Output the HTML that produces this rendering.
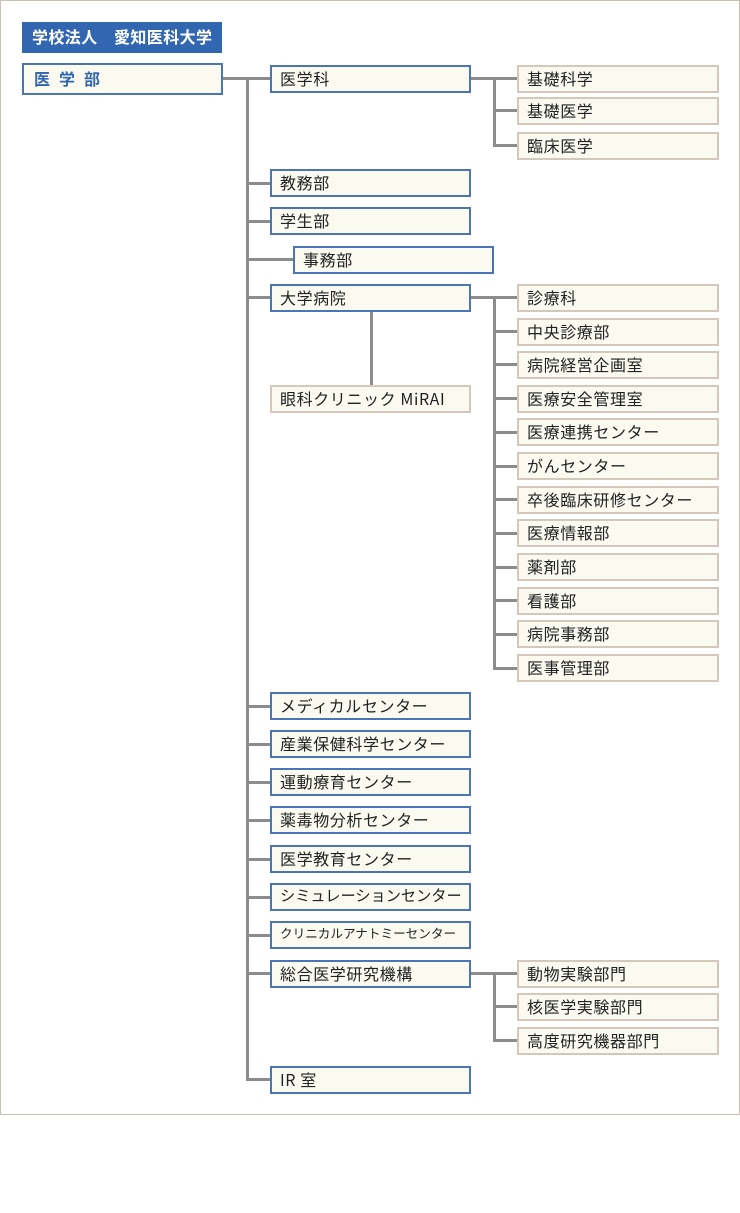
<!DOCTYPE html>
<html><head><meta charset="utf-8"><style>
body{margin:0;width:740px;height:1213px;background:#fff;position:relative;font-family:"Noto Sans CJK JP","Liberation Sans",sans-serif;}
.f{position:absolute;left:0;top:0;width:738px;height:1113px;border:1px solid #cbbfb2;}
.b{position:absolute;box-sizing:border-box;background:#fafaf0;font-size:16px;letter-spacing:0.6px;color:#222;padding-left:8px;padding-bottom:3px;display:flex;align-items:center;white-space:nowrap;line-height:1;}
.bl{border:2px solid #4a76b8;}
.tn{border:2px solid #d3c8ba;}
.l{position:absolute;background:#8c8c8c;}
</style></head><body>
<div class="f"></div>
<div class="b" style="left:22px;top:22px;width:200px;height:31px;background:#3366b0;color:#fff;font-weight:bold;padding-left:10px;letter-spacing:0.4px">学校法人　愛知医科大学</div>
<div class="b bl" style="left:22px;top:63px;width:201px;height:32px;color:#3366b0;font-weight:bold;letter-spacing:9px;padding-left:10px;">医学部</div>

<div class="l" style="left:223px;top:77px;width:47px;height:3px"></div>
<div class="l" style="left:246px;top:77px;width:3px;height:1003px"></div>
<div class="l" style="left:470px;top:77px;width:47px;height:3px"></div>
<div class="l" style="left:493px;top:77px;width:3px;height:70px"></div>
<div class="l" style="left:493px;top:109px;width:24px;height:3px"></div>
<div class="l" style="left:493px;top:144px;width:24px;height:3px"></div>
<div class="l" style="left:470px;top:296px;width:47px;height:3px"></div>
<div class="l" style="left:493px;top:296px;width:3px;height:373px"></div>
<div class="l" style="left:370px;top:311px;width:3px;height:74px"></div>
<div class="l" style="left:470px;top:972px;width:47px;height:3px"></div>
<div class="l" style="left:493px;top:972px;width:3px;height:69px"></div>
<div class="l" style="left:493px;top:1005px;width:24px;height:3px"></div>
<div class="l" style="left:493px;top:1039px;width:24px;height:3px"></div>
<div class="l" style="left:246px;top:182px;width:24px;height:3px"></div>
<div class="l" style="left:246px;top:220px;width:24px;height:3px"></div>
<div class="l" style="left:246px;top:258px;width:47px;height:3px"></div>
<div class="l" style="left:246px;top:296px;width:24px;height:3px"></div>
<div class="l" style="left:246px;top:705px;width:24px;height:3px"></div>
<div class="l" style="left:246px;top:743px;width:24px;height:3px"></div>
<div class="l" style="left:246px;top:781px;width:24px;height:3px"></div>
<div class="l" style="left:246px;top:819px;width:24px;height:3px"></div>
<div class="l" style="left:246px;top:858px;width:24px;height:3px"></div>
<div class="l" style="left:246px;top:896px;width:24px;height:3px"></div>
<div class="l" style="left:246px;top:934px;width:24px;height:3px"></div>
<div class="l" style="left:246px;top:972px;width:24px;height:3px"></div>
<div class="l" style="left:246px;top:1078px;width:24px;height:3px"></div>
<div class="l" style="left:493px;top:330px;width:24px;height:3px"></div>
<div class="l" style="left:493px;top:363px;width:24px;height:3px"></div>
<div class="l" style="left:493px;top:397px;width:24px;height:3px"></div>
<div class="l" style="left:493px;top:431px;width:24px;height:3px"></div>
<div class="l" style="left:493px;top:465px;width:24px;height:3px"></div>
<div class="l" style="left:493px;top:498px;width:24px;height:3px"></div>
<div class="l" style="left:493px;top:532px;width:24px;height:3px"></div>
<div class="l" style="left:493px;top:566px;width:24px;height:3px"></div>
<div class="l" style="left:493px;top:599px;width:24px;height:3px"></div>
<div class="l" style="left:493px;top:633px;width:24px;height:3px"></div>
<div class="l" style="left:493px;top:667px;width:24px;height:3px"></div>

<div class="b bl" style="left:270px;top:65px;width:201px;height:28px">医学科</div>
<div class="b bl" style="left:270px;top:169px;width:201px;height:28px">教務部</div>
<div class="b bl" style="left:270px;top:207px;width:201px;height:28px">学生部</div>
<div class="b bl" style="left:293px;top:246px;width:201px;height:28px">事務部</div>
<div class="b bl" style="left:270px;top:284px;width:201px;height:28px">大学病院</div>
<div class="b tn" style="left:270px;top:385px;width:201px;height:28px">眼科クリニック MiRAI</div>
<div class="b bl" style="left:270px;top:692px;width:201px;height:28px">メディカルセンター</div>
<div class="b bl" style="left:270px;top:730px;width:201px;height:28px">産業保健科学センター</div>
<div class="b bl" style="left:270px;top:768px;width:201px;height:28px">運動療育センター</div>
<div class="b bl" style="left:270px;top:806px;width:201px;height:28px">薬毒物分析センター</div>
<div class="b bl" style="left:270px;top:845px;width:201px;height:28px">医学教育センター</div>
<div class="b bl" style="left:270px;top:883px;width:201px;height:28px;font-size:15.2px;letter-spacing:0">シミュレーションセンター</div>
<div class="b bl" style="left:270px;top:921px;width:201px;height:28px;font-size:12.6px;letter-spacing:0">クリニカルアナトミーセンター</div>
<div class="b bl" style="left:270px;top:960px;width:201px;height:28px">総合医学研究機構</div>
<div class="b bl" style="left:270px;top:1066px;width:201px;height:28px">IR 室</div>

<div class="b tn" style="left:517px;top:65px;width:202px;height:28px">基礎科学</div>
<div class="b tn" style="left:517px;top:97px;width:202px;height:28px">基礎医学</div>
<div class="b tn" style="left:517px;top:132px;width:202px;height:28px">臨床医学</div>
<div class="b tn" style="left:517px;top:284px;width:202px;height:28px">診療科</div>
<div class="b tn" style="left:517px;top:318px;width:202px;height:28px">中央診療部</div>
<div class="b tn" style="left:517px;top:351px;width:202px;height:28px">病院経営企画室</div>
<div class="b tn" style="left:517px;top:385px;width:202px;height:28px">医療安全管理室</div>
<div class="b tn" style="left:517px;top:418px;width:202px;height:28px">医療連携センター</div>
<div class="b tn" style="left:517px;top:452px;width:202px;height:28px">がんセンター</div>
<div class="b tn" style="left:517px;top:486px;width:202px;height:28px">卒後臨床研修センター</div>
<div class="b tn" style="left:517px;top:519px;width:202px;height:28px">医療情報部</div>
<div class="b tn" style="left:517px;top:553px;width:202px;height:28px">薬剤部</div>
<div class="b tn" style="left:517px;top:587px;width:202px;height:28px">看護部</div>
<div class="b tn" style="left:517px;top:620px;width:202px;height:28px">病院事務部</div>
<div class="b tn" style="left:517px;top:654px;width:202px;height:28px">医事管理部</div>
<div class="b tn" style="left:517px;top:960px;width:202px;height:28px">動物実験部門</div>
<div class="b tn" style="left:517px;top:993px;width:202px;height:28px">核医学実験部門</div>
<div class="b tn" style="left:517px;top:1027px;width:202px;height:28px">高度研究機器部門</div>
</body></html>
